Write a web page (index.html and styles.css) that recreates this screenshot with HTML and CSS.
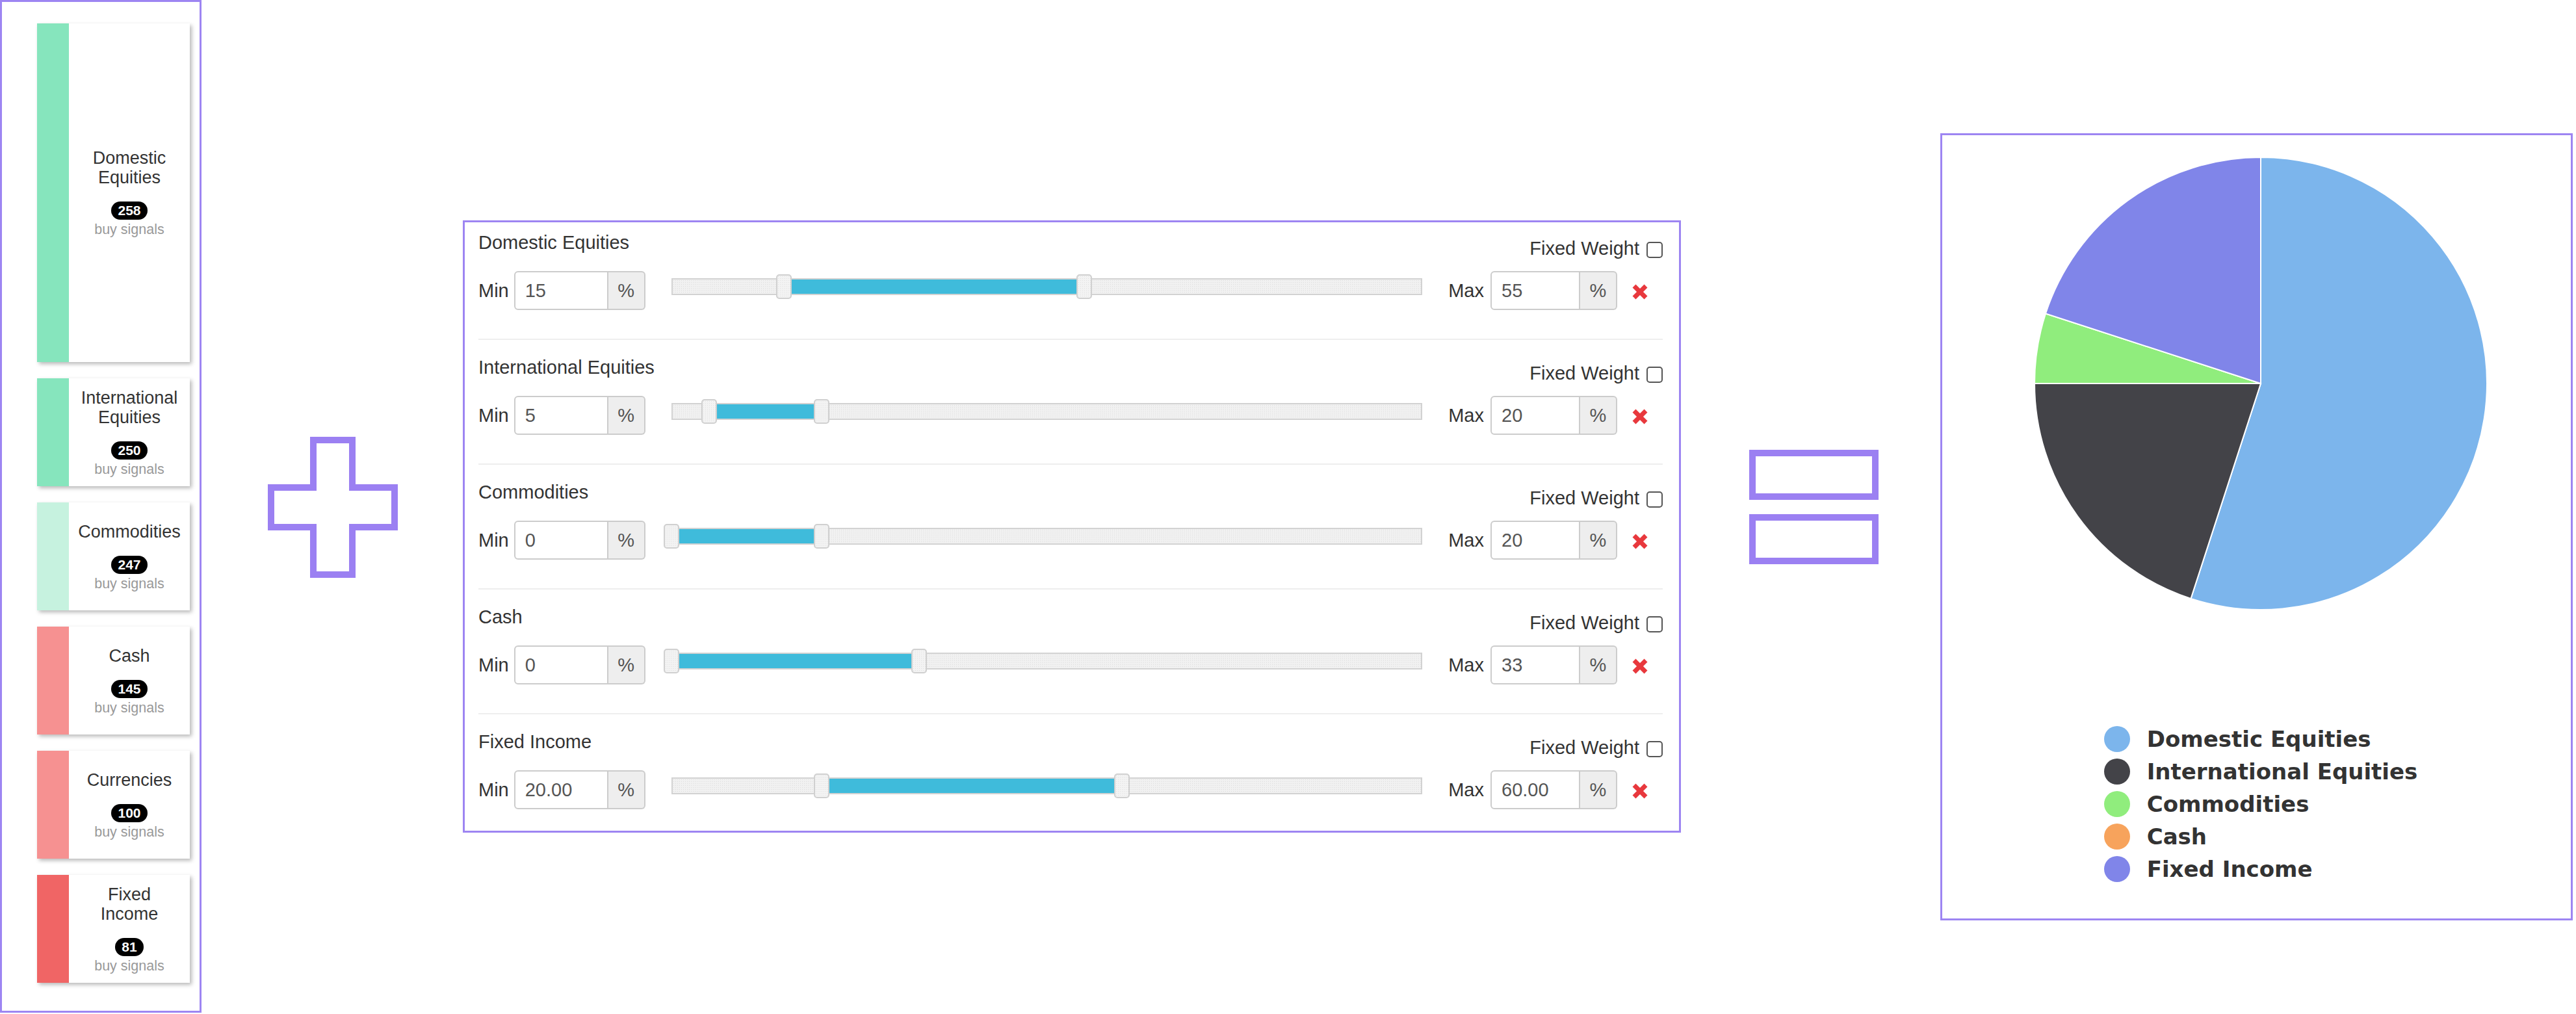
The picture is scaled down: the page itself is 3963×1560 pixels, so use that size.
FILE: index.html
```html
<!DOCTYPE html>
<html>
  <head>
    <title>Portfolio Builder</title>
    <link rel="stylesheet" href="styles.css">
  </head>
  <body>
    <div class="page">
      <!-- buy signal cards -->
      <div class="signals">
        <div class="signal signal-tall">
          <div class="signal-bar bar-green"></div>
          <div class="signal-body">
            <div class="signal-name">Domestic Equities</div>
            <span class="badge">258</span>
            <div class="signal-note">buy signals</div>
          </div>
        </div>
        <div class="signal">
          <div class="signal-bar bar-green"></div>
          <div class="signal-body">
            <div class="signal-name">International Equities</div>
            <span class="badge">250</span>
            <div class="signal-note">buy signals</div>
          </div>
        </div>
        <div class="signal">
          <div class="signal-bar bar-mint"></div>
          <div class="signal-body">
            <div class="signal-name">Commodities</div>
            <span class="badge">247</span>
            <div class="signal-note">buy signals</div>
          </div>
        </div>
        <div class="signal">
          <div class="signal-bar bar-pink"></div>
          <div class="signal-body">
            <div class="signal-name">Cash</div>
            <span class="badge">145</span>
            <div class="signal-note">buy signals</div>
          </div>
        </div>
        <div class="signal">
          <div class="signal-bar bar-pink"></div>
          <div class="signal-body">
            <div class="signal-name">Currencies</div>
            <span class="badge">100</span>
            <div class="signal-note">buy signals</div>
          </div>
        </div>
        <div class="signal">
          <div class="signal-bar bar-red"></div>
          <div class="signal-body">
            <div class="signal-name">Fixed Income</div>
            <span class="badge">81</span>
            <div class="signal-note">buy signals</div>
          </div>
        </div>
      </div>

      <svg class="plus" width="200" height="217" viewBox="0 0 200 217">
        <polygon points="70,5 130,5 130,78 195,78 195,139 130,139 130,212 70,212 70,139 5,139 5,78 70,78" />
      </svg>

      <!-- weight constraints -->
      <div class="weights">
        <div class="asset">
          <div class="asset-head">
            <span class="asset-name">Domestic Equities</span>
            <label class="fixed">Fixed Weight <input type="checkbox"></label>
          </div>
          <div class="asset-controls">
            <span class="bound">Min</span>
            <div class="input-group"><input type="text" value="15"><span class="addon">%</span></div>
            <div class="slider">
              <div class="track"><div class="range" style="left: 15%; width: 40%"></div></div>
              <span class="handle" style="left: 15%"></span>
              <span class="handle" style="left: 55%"></span>
            </div>
            <span class="bound bound-max">Max</span>
            <div class="input-group input-group-max"><input type="text" value="55"><span class="addon">%</span></div>
            <svg class="remove" width="26" height="26" viewBox="0 0 26 26"><path d="M4 4 L22 22 M22 4 L4 22" /></svg>
          </div>
        </div>
        <div class="asset">
          <div class="asset-head">
            <span class="asset-name">International Equities</span>
            <label class="fixed">Fixed Weight <input type="checkbox"></label>
          </div>
          <div class="asset-controls">
            <span class="bound">Min</span>
            <div class="input-group"><input type="text" value="5"><span class="addon">%</span></div>
            <div class="slider">
              <div class="track"><div class="range" style="left: 5%; width: 15%"></div></div>
              <span class="handle" style="left: 5%"></span>
              <span class="handle" style="left: 20%"></span>
            </div>
            <span class="bound bound-max">Max</span>
            <div class="input-group input-group-max"><input type="text" value="20"><span class="addon">%</span></div>
            <svg class="remove" width="26" height="26" viewBox="0 0 26 26"><path d="M4 4 L22 22 M22 4 L4 22" /></svg>
          </div>
        </div>
        <div class="asset">
          <div class="asset-head">
            <span class="asset-name">Commodities</span>
            <label class="fixed">Fixed Weight <input type="checkbox"></label>
          </div>
          <div class="asset-controls">
            <span class="bound">Min</span>
            <div class="input-group"><input type="text" value="0"><span class="addon">%</span></div>
            <div class="slider">
              <div class="track"><div class="range" style="left: 0%; width: 20%"></div></div>
              <span class="handle" style="left: 0%"></span>
              <span class="handle" style="left: 20%"></span>
            </div>
            <span class="bound bound-max">Max</span>
            <div class="input-group input-group-max"><input type="text" value="20"><span class="addon">%</span></div>
            <svg class="remove" width="26" height="26" viewBox="0 0 26 26"><path d="M4 4 L22 22 M22 4 L4 22" /></svg>
          </div>
        </div>
        <div class="asset">
          <div class="asset-head">
            <span class="asset-name">Cash</span>
            <label class="fixed">Fixed Weight <input type="checkbox"></label>
          </div>
          <div class="asset-controls">
            <span class="bound">Min</span>
            <div class="input-group"><input type="text" value="0"><span class="addon">%</span></div>
            <div class="slider">
              <div class="track"><div class="range" style="left: 0%; width: 33%"></div></div>
              <span class="handle" style="left: 0%"></span>
              <span class="handle" style="left: 33%"></span>
            </div>
            <span class="bound bound-max">Max</span>
            <div class="input-group input-group-max"><input type="text" value="33"><span class="addon">%</span></div>
            <svg class="remove" width="26" height="26" viewBox="0 0 26 26"><path d="M4 4 L22 22 M22 4 L4 22" /></svg>
          </div>
        </div>
        <div class="asset">
          <div class="asset-head">
            <span class="asset-name">Fixed Income</span>
            <label class="fixed">Fixed Weight <input type="checkbox"></label>
          </div>
          <div class="asset-controls">
            <span class="bound">Min</span>
            <div class="input-group"><input type="text" value="20.00"><span class="addon">%</span></div>
            <div class="slider">
              <div class="track"><div class="range" style="left: 20%; width: 40%"></div></div>
              <span class="handle" style="left: 20%"></span>
              <span class="handle" style="left: 60%"></span>
            </div>
            <span class="bound bound-max">Max</span>
            <div class="input-group input-group-max"><input type="text" value="60.00"><span class="addon">%</span></div>
            <svg class="remove" width="26" height="26" viewBox="0 0 26 26"><path d="M4 4 L22 22 M22 4 L4 22" /></svg>
          </div>
        </div>
      </div>

      <div class="equals">
        <div class="equals-bar"></div>
        <div class="equals-bar"></div>
      </div>

      <!-- resulting allocation -->
      <div class="chart">
        <svg class="pie" width="700" height="700" viewBox="0 0 700 700">
          <path fill="#7cb5ec" d="M350,350 L350,2 A348,348 0 1 1 242.46,680.97 Z" />
          <path fill="#434348" d="M350,350 L242.46,680.97 A348,348 0 0 1 2,350 Z" />
          <path fill="#90ed7d" d="M350,350 L2,350 A348,348 0 0 1 19.03,242.46 Z" />
          <path fill="#8085e9" d="M350,350 L19.03,242.46 A348,348 0 0 1 350,2 Z" />
        </svg>
        <ul class="legend">
          <li><span class="dot dot-blue"></span>Domestic Equities</li>
          <li><span class="dot dot-dark"></span>International Equities</li>
          <li><span class="dot dot-green"></span>Commodities</li>
          <li><span class="dot dot-orange"></span>Cash</li>
          <li><span class="dot dot-violet"></span>Fixed Income</li>
        </ul>
      </div>
    </div>
  </body>
</html>
```

FILE: styles.css
```css
/* allocation overview */
body {
  margin: 0;
  background-color: #fff;
  font-family: "Liberation Sans", Arial, sans-serif;
  color: #333;
}
.page {
  display: flex;
  align-items: center;
  height: 1560px;
}

/* buy signal cards */
.signals {
  align-self: flex-start;
  box-sizing: border-box;
  width: 310px;
  height: 1558px;
  padding: 33px 0 0 54px;
  border: 3px solid #9d85f2;
  display: flex;
  flex-direction: column;
  gap: 25px;
}
.signal {
  display: flex;
  width: 235px;
  height: 166px;
  background-color: #fff;
  box-shadow: 3px 3px 6px rgba(0, 0, 0, 0.28);
}
.signal-tall {
  height: 521px;
}
.signal-bar {
  width: 49px;
}
.bar-green {
  background-color: #86e5bd;
}
.bar-mint {
  background-color: #c6f2df;
}
.bar-pink {
  background-color: #f69191;
}
.bar-red {
  background-color: #f06565;
}
.signal-body {
  flex: 1;
  display: flex;
  flex-direction: column;
  align-items: center;
  justify-content: center;
  padding: 0 13px;
  text-align: center;
}
.signal-name {
  font-size: 27px;
  line-height: 30px;
  margin-bottom: 22px;
}
.badge {
  background-color: #000;
  color: #fff;
  font-weight: bold;
  font-size: 21px;
  line-height: 22px;
  padding: 3px 10px;
  border-radius: 14px;
}
.signal-note {
  margin-top: 3px;
  font-size: 21.5px;
  line-height: 24px;
  color: #999;
}

/* plus and equals signs */
.plus {
  margin: 0 100px 0 102px;
}
.plus polygon {
  fill: none;
  stroke: #9b80f2;
  stroke-width: 10;
}
.equals {
  display: flex;
  flex-direction: column;
  gap: 22px;
  margin: 0 95px 0 105px;
}
.equals-bar {
  box-sizing: border-box;
  width: 199px;
  height: 77px;
  border: 10px solid #9b80f2;
}

/* weight constraints */
.weights {
  box-sizing: border-box;
  width: 1874px;
  margin-top: 60px;
  padding: 0 25px 0 21px;
  border: 3px solid #9d85f2;
  font-size: 29px;
  line-height: 41px;
}
.asset {
  padding: 22px 0 44px;
  border-bottom: 2px solid #eee;
}
.asset:first-child {
  padding-top: 11px;
}
.asset:last-child {
  padding-bottom: 33px;
  border-bottom: none;
}
.asset-head {
  display: flex;
  justify-content: space-between;
  align-items: flex-start;
  height: 50px;
}
.fixed {
  display: flex;
  align-items: center;
  gap: 11px;
  padding-top: 9px;
}
.fixed input {
  appearance: none;
  margin: 3px 0 0;
  width: 25px;
  height: 25px;
  border: 2px solid #555;
  border-radius: 5px;
  background-color: #fff;
}
.asset-controls {
  display: flex;
  align-items: center;
  height: 60px;
  margin-top: 14px;
}
.bound {
  margin-right: 8px;
}
.bound-max {
  margin-right: 10px;
}
.input-group {
  display: flex;
  width: 202px;
  height: 60px;
}
.input-group-max {
  width: 195px;
}
.input-group input {
  box-sizing: border-box;
  width: 0;
  flex: 1;
  height: 60px;
  padding: 0 15px;
  border: 2px solid #ccc;
  border-radius: 6px 0 0 6px;
  font-family: "Liberation Sans", Arial, sans-serif;
  font-size: 29px;
  color: #555;
}
.addon {
  box-sizing: border-box;
  width: 57px;
  height: 60px;
  line-height: 56px;
  text-align: center;
  color: #555;
  background-color: #eee;
  border: 2px solid #ccc;
  border-left: none;
  border-radius: 0 6px 6px 0;
}
.slider {
  position: relative;
  flex: 1;
  height: 38px;
  margin: 0 40px 12px;
}
.track {
  position: absolute;
  left: 0;
  right: 0;
  top: 6px;
  height: 26px;
  box-sizing: border-box;
  border: 2px solid #d2d2d2;
  background-color: #f1f1f1;
  background-image: radial-gradient(#dcdcdc 0.6px, transparent 0.8px);
  background-size: 3px 3px;
}
.range {
  position: absolute;
  top: 0;
  bottom: 0;
  background-color: #3fbbdb;
}
.handle {
  position: absolute;
  top: 0;
  box-sizing: border-box;
  width: 24px;
  height: 38px;
  margin-left: -12px;
  border: 2px solid #d0d0d0;
  border-radius: 5px;
  background-color: #f3f3f3;
  background-image: radial-gradient(#e0e0e0 0.6px, transparent 0.8px);
  background-size: 3px 3px;
}
.remove {
  margin: 4px 22px 0 22px;
}
.remove path {
  stroke: #e8383d;
  stroke-width: 7;
  fill: none;
}

/* resulting allocation */
.chart {
  box-sizing: border-box;
  width: 973px;
  height: 1211px;
  margin-top: 60px;
  border: 3px solid #9d85f2;
  display: flex;
  flex-direction: column;
  align-items: center;
}
.pie {
  margin: 32px 0 0 13px;
}
.pie path {
  stroke: #fff;
  stroke-width: 2;
}
.legend {
  list-style: none;
  margin: 172px 0 0 13px;
  padding: 0;
  font-family: "DejaVu Sans", sans-serif;
  font-weight: bold;
  font-size: 34px;
  line-height: 50px;
  color: #333;
}
.legend li {
  display: flex;
  align-items: center;
  height: 50px;
}
.dot {
  width: 40px;
  height: 40px;
  border-radius: 50%;
  margin-right: 26px;
}
.dot-blue {
  background-color: #7cb5ec;
}
.dot-dark {
  background-color: #434348;
}
.dot-green {
  background-color: #90ed7d;
}
.dot-orange {
  background-color: #f7a35c;
}
.dot-violet {
  background-color: #8085e9;
}
```
